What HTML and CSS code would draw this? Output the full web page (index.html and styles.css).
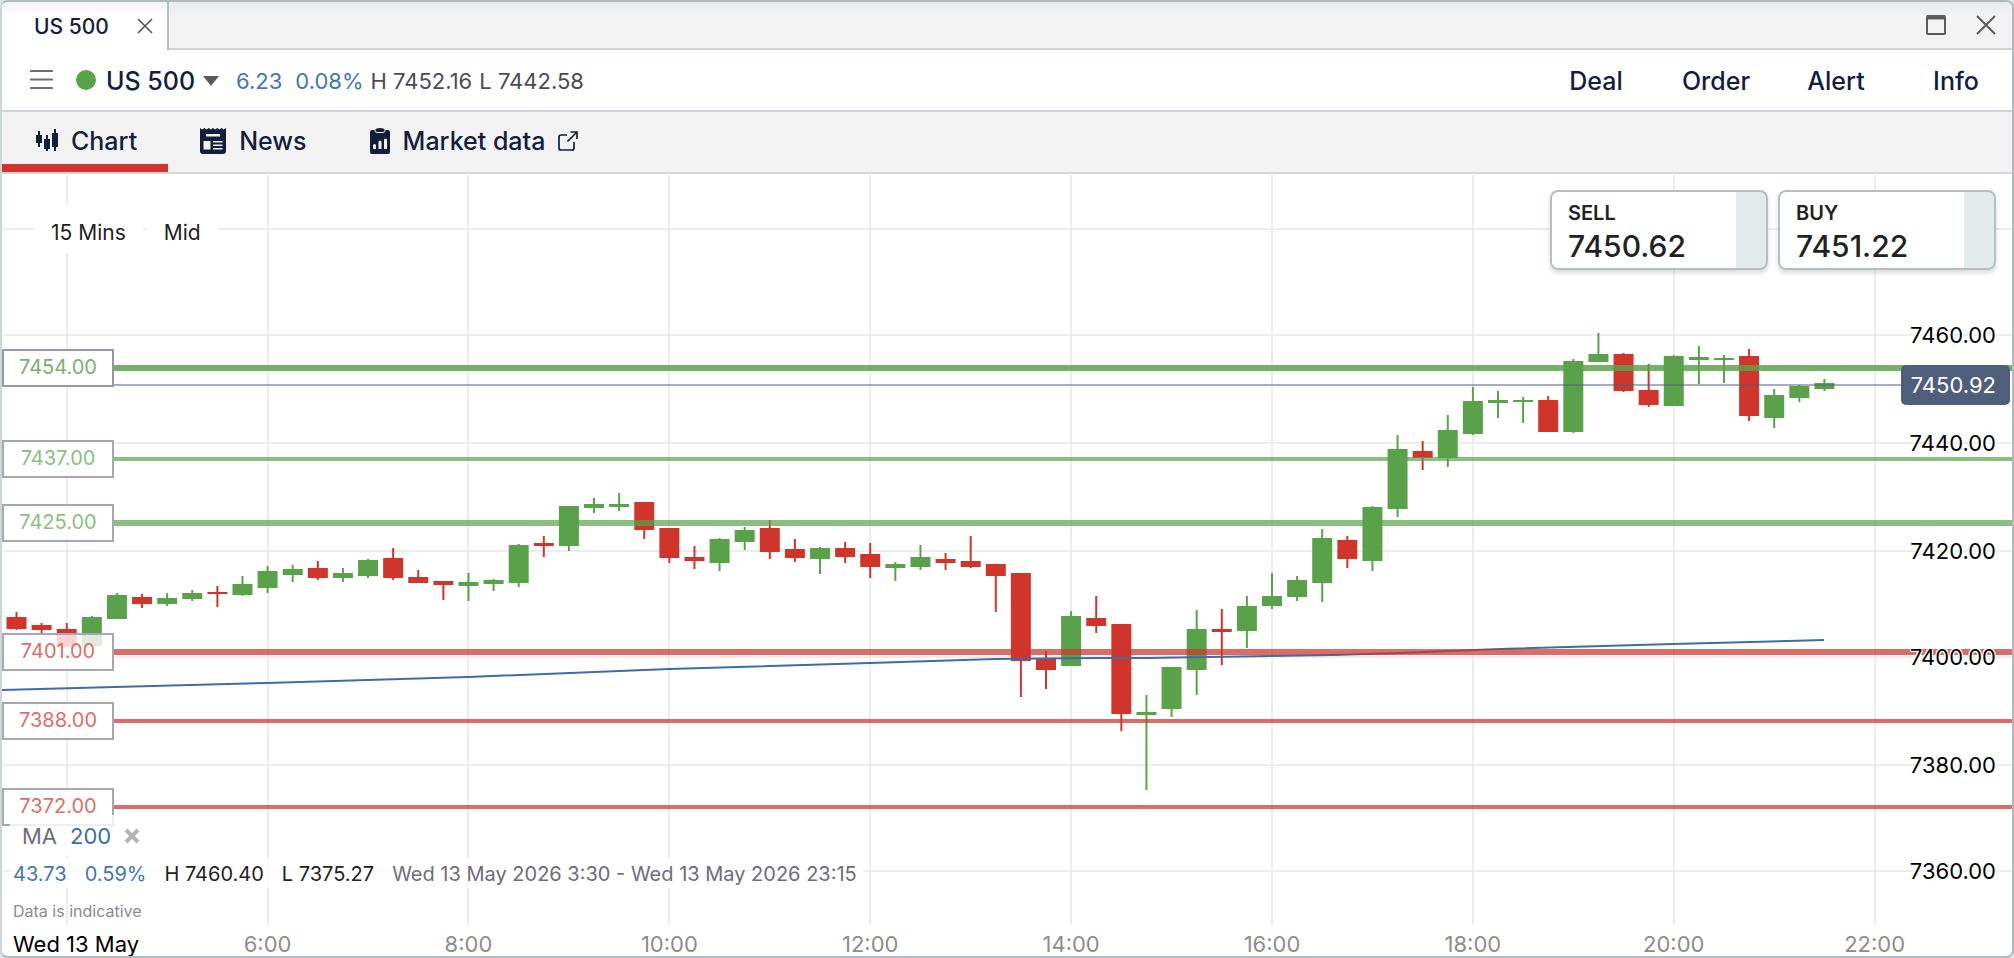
FILE: index.html
```html
<!DOCTYPE html>
<html lang="en">
<head>
    <meta charset="UTF-8">
    <title>US 500</title>
    <link rel="stylesheet" href="styles.css">
</head>
<body>
    <div class="window">
        <div class="titlebar">
            <div class="window-tab">
                <span>US 500</span>
                <button class="icon-button" aria-label="Close tab">
                    <svg width="16" height="16" viewBox="0 0 16 16"><path d="M1 1l14 14M15 1L1 15" stroke="#555" stroke-width="1.600" fill="none"/></svg>
                </button>
            </div>
            <div class="window-actions">
                <button class="icon-button" aria-label="Maximise">
                    <svg width="20" height="20" viewBox="0 0 20 20"><rect x="1" y="1" width="18" height="18" rx="1" fill="none" stroke="#5a5c5c" stroke-width="2"/><path d="M1 2.500h18" stroke="#5a5c5c" stroke-width="4"/></svg>
                </button>
                <button class="icon-button" aria-label="Close">
                    <svg width="20" height="20" viewBox="0 0 20 20"><path d="M1 1l18 18M19 1L1 19" stroke="#5a5c5c" stroke-width="2" fill="none"/></svg>
                </button>
            </div>
        </div>

        <header class="market">
            <button class="icon-button menu-button" aria-label="Menu">
                <svg width="23" height="20" viewBox="0 0 23 20"><path d="M1 1h21M1 9.500h21M1 18h21" stroke="#6e6b7b" stroke-width="2.200" stroke-linecap="round"/></svg>
            </button>
            <span class="status-dot"></span>
            <button class="market-name">US 500
                <svg width="16" height="10" viewBox="0 0 16 10"><path d="M0 0h16L8 10z" fill="#5a5c5c"/></svg>
            </button>
            <div class="market-stats">
                <span class="change">6.23</span>
                <span class="change percent">0.08%</span>
                <span>H 7452.16</span>
                <span>L 7442.58</span>
            </div>
            <div class="market-actions">
                <button>Deal</button>
                <button>Order</button>
                <button>Alert</button>
                <button>Info</button>
            </div>
        </header>

        <nav class="tabs">
            <a href="#chart" class="tab active">
                <svg width="24" height="26" viewBox="0 0 24 26"><path d="M2 7h6v8H2zM10 11h6v10h-6zM18 5h6v14h-6z" fill="#141d3d"/><path d="M5 3v16M13 7v16M21 1v22" stroke="#141d3d" stroke-width="2"/></svg>
                Chart
            </a>
            <a href="#news" class="tab">
                <svg width="26" height="27" viewBox="0 0 26 27"><path d="M0 0l2 1.500L4.400 0l2.100 1.500L8.700 0l2.100 1.500L13 0l2.100 1.500L17.300 0l2.100 1.500L21.600 0l2.100 1.500L26 0v23q0 3-3 3H3q-3 0-3-3z" fill="#141d3d"/><path d="M6 6h14v2.500H6zM3.500 13h7v8.500h-7zM13 13h9.500v1.500H13zM13 16.500h9.500V18H13zM13 20h9.500v1.500H13z" fill="#f3f3f3"/></svg>
                News
            </a>
            <a href="#market-data" class="tab">
                <svg width="20" height="27" viewBox="0 0 20 27"><path d="M2 2h3q1-2 5-2t5 2h3q2 0 2 2v20q0 2-2 2H2q-2 0-2-2V4q0-2 2-2z" fill="#141d3d"/><path d="M5 2q0 2.500 2 2.500h6q2 0 2-2.500" fill="none" stroke="#f3f3f3" stroke-width="1"/><path d="M3 17.500q0-1.500 1.500-1.500t1.500 1.500V21H3zM8.500 14q0-1.500 1.500-1.500t1.500 1.500v7h-3zM14 12q0-1.500 1.500-1.500T17 12v9h-3z" fill="#f3f3f3"/></svg>
                Market data
                <svg class="external" width="20" height="20" viewBox="0 0 20 20"><path d="M9 4H3q-2 0-2 2v11q0 2 2 2h11q2 0 2-2v-6M9.500 10.500L18.500 1.500M12.500 1H19v7" fill="none" stroke="#141d3d" stroke-width="1.700"/></svg>
            </a>
        </nav>

        <main class="chart">
            <svg class="plot" id="plot" viewBox="2 174 2010 782" preserveAspectRatio="none"></svg>
            <div id="labels"></div>

            <div class="chart-settings">
                <button>15 Mins</button>
                <button>Mid</button>
            </div>

            <div class="tickets">
                <button class="ticket"><span class="side">SELL</span><span class="price">7450.62</span></button>
                <button class="ticket"><span class="side">BUY</span><span class="price">7451.22</span></button>
            </div>

            <div class="chart-footer">
                <div class="indicator">
                    <span>MA</span>
                    <span class="period">200</span>
                    <button class="icon-button" aria-label="Remove indicator">
                        <svg width="16" height="16" viewBox="0 0 16 16"><path d="M2 2l12 12M14 2L2 14" stroke="#b3b2b9" stroke-width="4"/></svg>
                    </button>
                </div>
                <div class="range">
                    <span class="change">43.73</span>
                    <span class="change">0.59%</span>
                    <span>H 7460.40</span>
                    <span>L 7375.27</span>
                    <span class="dates">Wed 13 May 2026 3:30 - Wed 13 May 2026 23:15</span>
                </div>
                <div class="note">Data is indicative</div>
                <div class="start-date">Wed 13 May</div>
            </div>
        </main>
    </div>
    <script src="chart.js"></script>
</body>
</html>
```
FILE: styles.css
```css
/* Base styles */
* {
    box-sizing: border-box;
}

body {
    margin: 0;
    background: #dfe5e8;
    font-family: Inter, "Liberation Sans", sans-serif;
    color: #222;
}

button {
    font: inherit;
    color: inherit;
    background: none;
    border: 0;
    padding: 0;
    cursor: pointer;
}

svg {
    display: block;
    flex: none;
}

.icon-button {
    display: flex;
}

.window {
    display: flex;
    flex-direction: column;
    height: 100vh;
    background: white;
    border: 2px solid #b0b9bd;
    border-left-color: #cdd5d8;
    border-radius: 8px;
    overflow: hidden;
}

/* Title bar */
.titlebar {
    display: flex;
    justify-content: space-between;
    height: 48px;
    background: linear-gradient(#e8eaec, #f3f3f3 14px);
    border-bottom: 2px solid #cdd3d8;
}

.window-tab {
    display: flex;
    align-items: center;
    gap: 28px;
    height: 48px;
    padding: 0 14px 0 32px;
    background: linear-gradient(#f2f3f5, white 14px);
    border-right: 2px solid #b5bfc1;
    color: #141d3d;
    font-size: 21px;
    font-weight: 500;
}

.window-actions {
    display: flex;
    align-items: center;
    gap: 30px;
    padding-right: 16px;
}

/* Market header */
.market {
    display: flex;
    align-items: center;
    height: 62px;
    padding-left: 28px;
    border-bottom: 2px solid #cdd3d8;
}

.status-dot {
    width: 20px;
    height: 20px;
    margin: 0 10px 0 23px;
    border-radius: 50%;
    background: #5aa24a;
}

.market-name {
    display: flex;
    align-items: center;
    gap: 8px;
    padding-top: 2px;
    color: #141d3d;
    font-size: 25px;
    font-weight: 500;
}

.market-stats {
    display: flex;
    gap: 7px;
    margin-left: 17px;
    padding-top: 2px;
    color: #4c4a54;
    font-size: 22px;
}

.change {
    color: #4376b5;
}

.percent {
    margin-left: 6px;
}

.market-actions {
    display: flex;
    gap: 8px;
    margin-left: auto;
    padding-top: 2px;
    color: #141d3d;
    font-size: 25px;
    font-weight: 500;
}

.market-actions button {
    width: 112px;
}

/* Tabs */
.tabs {
    display: flex;
    height: 62px;
    background: #f3f3f3;
    border-bottom: 2px solid #d6d5dc;
}

.tab {
    display: flex;
    align-items: center;
    gap: 13px;
    padding: 6px 31px 0 32px;
    border-bottom: 8px solid transparent;
    color: #141d3d;
    font-size: 25px;
    font-weight: 500;
    text-decoration: none;
}

.tab.active {
    border-bottom-color: #cf352b;
}

/* Chart */
.chart {
    position: relative;
    flex: 1;
    overflow: hidden;
}

.plot {
    position: absolute;
    width: 100%;
    height: 100%;
}

.grid {
    stroke: #e8e8e8;
    stroke-opacity: 0.8;
    stroke-width: 2;
}

.up {
    fill: #5aa24a;
}

.down {
    fill: #cf352b;
}

.average {
    fill: none;
    stroke: #3e6ca8;
    stroke-width: 2;
}

.price-label {
    position: absolute;
    right: 16px;
    transform: translateY(-50%);
    color: black;
    font-size: 22px;
    line-height: 25px;
    text-shadow: 1px 1px white, -1px 1px white, 1px -1px white, -1px -1px white;
}

.price-label.current {
    right: 2px;
    height: 40px;
    padding: 0 14px 0 10px;
    border-radius: 5px;
    background: #4f5e7b;
    color: white;
    line-height: 41px;
    text-shadow: none;
}

.time-label {
    position: absolute;
    bottom: 0;
    transform: translateX(-50%);
    color: #8e8d89;
    font-size: 22px;
    line-height: 24px;
}

.level-label {
    position: absolute;
    left: 0;
    width: 112px;
    height: 38px;
    transform: translateY(-50%);
    border: 2px solid #a8a7b1;
    background: rgba(255, 255, 255, 0.8);
    font-size: 20px;
    line-height: 33px;
    text-align: center;
}

.resistance {
    color: #8abf80;
}

.strong {
    color: #76b26b;
    border-color: #9896a2;
}

.support {
    color: #dd6e68;
}

.chart-settings {
    position: absolute;
    top: 31px;
    left: 32px;
    display: flex;
    gap: 4px;
    font-size: 21px;
    line-height: 40px;
}

.chart-settings button {
    padding: 8px 17px 0;
    background: rgba(255, 255, 255, 0.9);
}

.tickets {
    position: absolute;
    top: 16px;
    right: 16px;
    display: flex;
    gap: 10px;
}

.ticket {
    display: flex;
    flex-direction: column;
    width: 218px;
    height: 80px;
    padding: 9px 16px;
    border: 2px solid #b5bfc1;
    border-radius: 8px;
    background: linear-gradient(to left, #e2eaec 30px, white 30px);
    box-shadow: 0 3px 5px rgba(0, 0, 0, 0.15);
    font-weight: 500;
    text-align: left;
}

.side {
    font-size: 20px;
    font-weight: 600;
    line-height: 24px;
}

.price {
    font-size: 30px;
    line-height: 42px;
}

.chart-footer {
    position: absolute;
    left: 8px;
    bottom: 0;
    display: flex;
    flex-direction: column;
    align-items: flex-start;
}

.indicator {
    display: flex;
    align-items: center;
    gap: 13px;
    height: 41px;
    margin-bottom: 2px;
    padding: 0 14px 0 12px;
    background: rgba(255, 255, 255, 0.8);
    color: #6e6b7b;
    font-size: 22px;
}

.period {
    color: #3e6ca8;
}

.range {
    display: flex;
    gap: 18px;
    height: 30px;
    padding: 0 6px 0 3px;
    background: rgba(255, 255, 255, 0.8);
    font-size: 20px;
    line-height: 32px;
}

.dates {
    color: #6e6b7b;
}

.note {
    margin: 11px 0 9px;
    padding-left: 3px;
    color: #8b8b8b;
    font-size: 16px;
    line-height: 24px;
}

.start-date {
    padding-left: 3px;
    color: black;
    font-size: 22px;
    line-height: 24px;
}
```
FILE: chart.js
```js
// Size of the plot's coordinate space, same as the viewBox of the svg
const plotBox = { x: 2, y: 174, width: 2010, height: 782 };

const prices = [
    { y: 229, text: "" },
    { y: 335, text: "7460.00" },
    { y: 443, text: "7440.00" },
    { y: 551, text: "7420.00" },
    { y: 657, text: "7400.00" },
    { y: 765, text: "7380.00" },
    { y: 871, text: "7360.00" }
];

const times = ["", "6:00", "8:00", "10:00", "12:00", "14:00", "16:00", "18:00", "20:00", "22:00"];

const levels = [
    { y: 368, text: "7454.00", kind: "resistance strong", color: "#5aa24a", opacity: 0.84, width: 6 },
    { y: 459, text: "7437.00", kind: "resistance", color: "#5aa24a", opacity: 0.7, width: 4 },
    { y: 523, text: "7425.00", kind: "resistance", color: "#5aa24a", opacity: 0.7, width: 6 },
    { y: 652, text: "7401.00", kind: "support", color: "#cf352b", opacity: 0.72, width: 6 },
    { y: 721, text: "7388.00", kind: "support", color: "#cf352b", opacity: 0.72, width: 4 },
    { y: 807, text: "7372.00", kind: "support", color: "#cf352b", opacity: 0.72, width: 4 }
];

// high, body top, body bottom, low, 1 = up / 0 = down
const candles = [
    [612, 617, 629, 630, 0], [623, 625, 630, 635, 0], [623, 629, 647, 647, 0], [616, 617, 646, 646, 1],
    [593, 595, 619, 619, 1], [594, 597, 604, 608, 0], [593, 598, 604, 606, 1], [590, 593, 599, 601, 1],
    [586, 592, 594, 607, 0], [576, 584, 595, 596, 1], [566, 571, 588, 593, 1], [565, 569, 575, 582, 1],
    [561, 568, 578, 580, 0], [568, 573, 578, 582, 1], [559, 560, 576, 578, 1], [548, 558, 578, 580, 0],
    [570, 577, 583, 583, 0], [581, 581, 585, 600, 0], [573, 582, 586, 601, 1], [579, 580, 584, 591, 1],
    [544, 545, 583, 587, 1], [536, 543, 546, 557, 0], [506, 506, 546, 551, 1], [498, 504, 508, 513, 1],
    [493, 504, 507, 511, 1], [502, 502, 530, 539, 0], [528, 528, 558, 563, 0], [546, 557, 561, 569, 0],
    [538, 539, 563, 571, 1], [527, 530, 542, 550, 1], [520, 528, 552, 559, 0], [539, 549, 558, 562, 0],
    [547, 548, 559, 574, 1], [542, 548, 557, 563, 0], [543, 554, 567, 578, 0], [562, 564, 568, 581, 1],
    [545, 557, 567, 570, 1], [553, 559, 563, 570, 0], [536, 561, 567, 568, 0], [564, 564, 576, 612, 0],
    [573, 573, 661, 697, 0], [651, 659, 670, 689, 0], [611, 616, 666, 666, 1], [596, 618, 626, 633, 0],
    [624, 624, 714, 731, 0], [695, 712, 715, 790, 1], [667, 667, 709, 717, 1], [610, 629, 670, 695, 1],
    [609, 629, 632, 665, 0], [596, 606, 631, 648, 1], [573, 596, 606, 609, 1], [576, 580, 597, 601, 1],
    [529, 538, 583, 602, 1], [536, 540, 559, 568, 0], [506, 507, 561, 571, 1], [435, 449, 509, 517, 1],
    [441, 451, 458, 470, 0], [415, 430, 458, 467, 1], [387, 401, 434, 435, 1], [391, 400, 403, 418, 1],
    [397, 400, 402, 423, 1], [396, 400, 432, 432, 0], [359, 361, 432, 433, 1], [333, 354, 362, 362, 1],
    [353, 354, 391, 392, 0], [364, 390, 405, 407, 0], [355, 356, 406, 406, 1], [346, 357, 360, 384, 1],
    [355, 358, 360, 383, 1], [349, 356, 416, 421, 0], [389, 395, 418, 428, 1], [385, 386, 398, 402, 1],
    [379, 383, 389, 391, 1]
];

const average = "2,690 267,683 468,677 669,669 870,663 995,659 1097,658 1147,658 1270,656 1333,655 1400,653 1500,649 1673,644 1824,640";

const candleX = i => 16.5 + 25.11 * i;
const line = (x1, y1, x2, y2, attrs) => `<line x1="${x1}" y1="${y1}" x2="${x2}" y2="${y2}" ${attrs}/>`;
const left = x => `left:${(x - plotBox.x) / plotBox.width * 100}%`;
const top_ = y => `top:${(y - plotBox.y) / plotBox.height * 100}%`;

function drawPlot() {
    let svg = "";
    times.forEach((t, i) => {
        const x = Math.round(candleX(2 + 8 * i));
        svg += line(x, 175, x, 925, 'class="grid"');
    });
    prices.forEach(p => {
        svg += line(3, p.y, 2012, p.y, 'class="grid"');
    });
    candles.forEach(([high, top, bottom, low, up], i) => {
        const x = candleX(i);
        svg += `<g class="${up ? "up" : "down"}">
            <rect x="${x - 1}" y="${high}" width="2" height="${low - high}"/>
            <rect x="${x - 10}" y="${top}" width="20" height="${bottom - top}"/>
        </g>`;
    });
    svg += `<polyline class="average" points="${average}"/>`;
    svg += line(114, 385, 1902, 385, 'stroke="#4f5e7b" stroke-opacity="0.5" stroke-width="2"');
    levels.forEach(l => {
        svg += line(114, l.y, 2012, l.y, `stroke="${l.color}" stroke-opacity="${l.opacity}" stroke-width="${l.width}"`);
    });
    document.getElementById("plot").innerHTML = svg;
}

function drawLabels() {
    let html = "";
    levels.forEach(l => {
        html += `<div class="level-label ${l.kind}" style="${top_(l.y)}">${l.text}</div>`;
    });
    prices.forEach(p => {
        html += `<div class="price-label" style="${top_(p.y)}">${p.text}</div>`;
    });
    html += `<div class="price-label current" style="${top_(385)}">7450.92</div>`;
    times.forEach((t, i) => {
        html += `<div class="time-label" style="${left(candleX(2 + 8 * i))}">${t}</div>`;
    });
    document.getElementById("labels").innerHTML = html;
}

drawPlot();
drawLabels();
```
